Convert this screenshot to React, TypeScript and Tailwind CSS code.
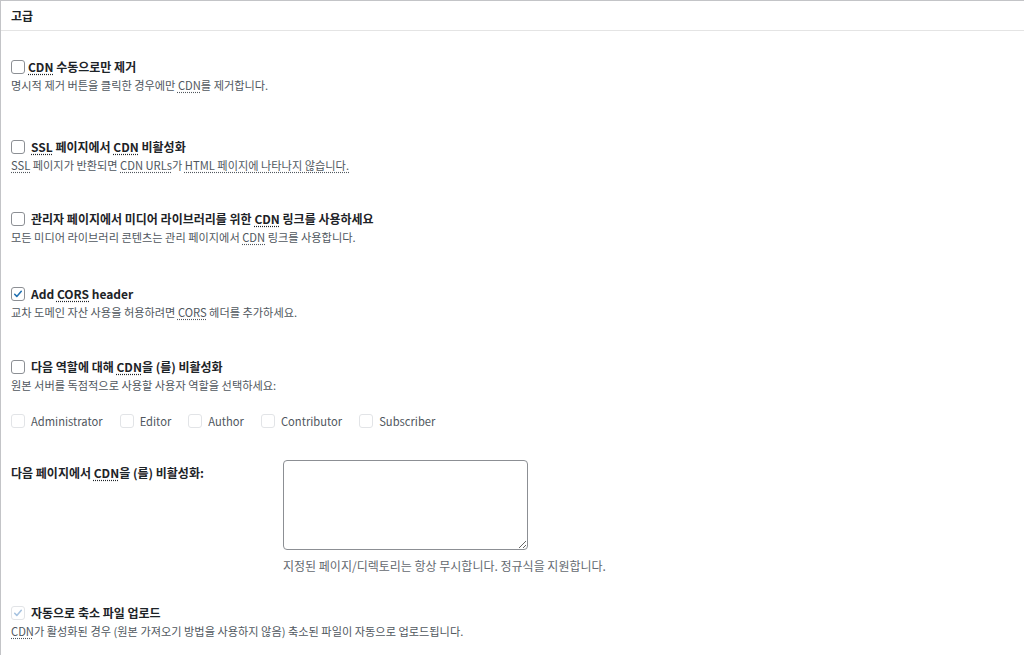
import React from 'react';

const font = { fontFamily: '"Noto Sans CJK KR", "Noto Sans", sans-serif' };

function Abbr({ children }: { children: React.ReactNode }) {
  return (
    <abbr className="no-underline [text-decoration:underline_dotted] decoration-[#a7aaad] underline-offset-2">
      {children}
    </abbr>
  );
}

function Box({ checked = false, disabled = false }: { checked?: boolean; disabled?: boolean }) {
  return (
    <span
      className={`flex h-[14px] w-[14px] shrink-0 items-center justify-center rounded-[3px] border bg-white ${
        disabled ? 'border-[#e2e4e7]' : 'border-[#8c8f94]'
      }`}
    >
      {checked && (
        <svg viewBox="0 0 20 20" className="h-[14px] w-[14px]">
          <path
            d="M4.5 10.5l3.5 3.5 7.5-8.5"
            fill="none"
            stroke={disabled ? '#a7c3e0' : '#2271b1'}
            strokeWidth="2.6"
            strokeLinecap="round"
            strokeLinejoin="round"
          />
        </svg>
      )}
    </span>
  );
}

function Option({
  title,
  desc,
  checked,
  disabled,
  gap = 'gap-[6px]',
  className = '',
}: {
  title: React.ReactNode;
  desc: React.ReactNode;
  checked?: boolean;
  disabled?: boolean;
  gap?: string;
  className?: string;
}) {
  return (
    <div className={className}>
      <label className={`flex h-[19px] items-center ${gap}`}>
        <Box checked={checked} disabled={disabled} />
        <span className="text-[12px] font-bold text-[#1d2327]">{title}</span>
      </label>
      <p className="h-[19px] text-[11.2px] leading-[19px] text-[#50575e]">{desc}</p>
    </div>
  );
}

export default function App() {
  const roles = ['Administrator', 'Editor', 'Author', 'Contributor', 'Subscriber'];

  return (
    <div className="h-[655px] overflow-hidden bg-white" style={font}>
      <div className="h-full border-l border-t border-[#c3c4c7]">
        <div className="flex h-[30px] items-center border-b border-[#e4e4e4] px-[10px]">
          <h2 className="text-[12px] font-bold text-[#1d2327]">고급</h2>
        </div>

        <div className="px-[10px]">
          <Option
            className="mt-[26px]"
            gap="gap-[3px]"
            title={<><Abbr>CDN</Abbr> 수동으로만 제거</>}
            desc={<>명시적 제거 버튼을 클릭한 경우에만 <Abbr>CDN</Abbr>를 제거합니다.</>}
          />
          <Option
            className="mt-[42px]"
            title={<><Abbr>SSL</Abbr> 페이지에서 <Abbr>CDN</Abbr> 비활성화</>}
            desc={<><Abbr>SSL</Abbr> 페이지가 반환되면 <Abbr>CDN URLs</Abbr>가 <Abbr>HTML 페이지에 나타나지 않습니다.</Abbr></>}
          />
          <Option
            className="mt-[34px]"
            title={<>관리자 페이지에서 미디어 라이브러리를 위한 <Abbr>CDN</Abbr> 링크를 사용하세요</>}
            desc={<>모든 미디어 라이브러리 콘텐츠는 관리 페이지에서 <Abbr>CDN</Abbr> 링크를 사용합니다.</>}
          />
          <Option
            className="mt-[37px]"
            checked
            title={<>Add <Abbr>CORS</Abbr> header</>}
            desc={<>교차 도메인 자산 사용을 허용하려면 <Abbr>CORS</Abbr> 헤더를 추가하세요.</>}
          />
          <Option
            className="mt-[35px]"
            title={<>다음 역할에 대해 <Abbr>CDN</Abbr>을 (를) 비활성화</>}
            desc={<>원본 서버를 독점적으로 사용할 사용자 역할을 선택하세요:</>}
          />

          <div className="mt-[17px] flex h-[19px] items-center gap-[17px]">
            {roles.map((r) => (
              <label key={r} className="flex items-center gap-[6px]">
                <Box disabled />
                <span className="text-[11.2px] text-[#50575e]">{r}</span>
              </label>
            ))}
          </div>

          <div className="mt-[29px] flex">
            <div className="w-[272px] pt-[3px] text-[12px] font-bold leading-[19px] text-[#1d2327]">
              다음 페이지에서 <Abbr>CDN</Abbr>을 (를) 비활성화:
            </div>
            <div>
              <textarea className="block h-[90px] w-[245px] rounded-[4px] border border-[#8c8f94] bg-white" />
              <p className="mt-[6px] h-[19px] text-[12px] leading-[19px] text-[#646970]">
                지정된 페이지/디렉토리는 항상 무시합니다. 정규식을 지원합니다.
              </p>
            </div>
          </div>

          <Option
            className="mt-[28px]"
            checked
            disabled
            title={<>자동으로 축소 파일 업로드</>}
            desc={<><Abbr>CDN</Abbr>가 활성화된 경우 (원본 가져오기 방법을 사용하지 않음) 축소된 파일이 자동으로 업로드됩니다.</>}
          />
        </div>
      </div>
    </div>
  );
}
